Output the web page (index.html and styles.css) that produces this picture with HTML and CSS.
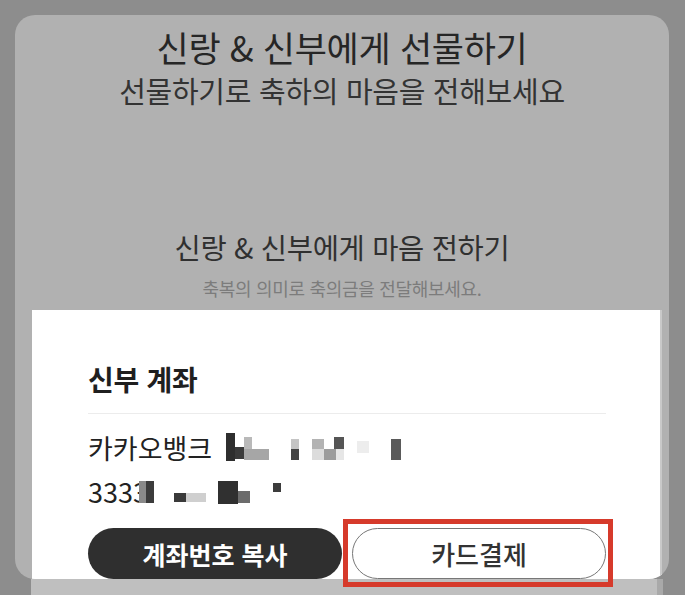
FILE: index.html
```html
<!DOCTYPE html>
<html lang="ko">
<head>
  <meta charset="UTF-8" />
  <meta name="viewport" content="width=device-width, initial-scale=1.0"/>
  <title>마음 전하기</title>
  <link rel="stylesheet" href="styles.css">
</head>
<body>
  <div class="page">
    <div class="sheet">
      <h1 class="gift-title">신랑 &amp; 신부에게 선물하기</h1>
      <p class="gift-sub">선물하기로 축하의 마음을 전해보세요</p>

      <h2 class="money-title">신랑 &amp; 신부에게 마음 전하기</h2>
      <p class="money-sub">축복의 의미로 축의금을 전달해보세요.</p>

      <div class="account-card">
        <h3 class="account-title">신부 계좌</h3>
        <div class="account-line">
          <span>카카오뱅크</span>
          <svg class="mosaic" width="190" height="30" viewBox="0 0 190 30">
            <rect x="0" y="0" width="9" height="28" fill="#2e2e2e"/>
            <rect x="9" y="14" width="9" height="12" fill="#3a3a3a"/>
            <rect x="18" y="4" width="8" height="12" fill="#b9b9b9"/>
            <rect x="18" y="16" width="25" height="11" fill="#a6a6a6"/>
            <rect x="65" y="6" width="8" height="10" fill="#c4c4c4"/>
            <rect x="65" y="16" width="8" height="11" fill="#444"/>
            <rect x="86" y="6" width="12" height="10" fill="#b3b3b3"/>
            <rect x="98" y="16" width="12" height="11" fill="#9c9c9c"/>
            <rect x="86" y="16" width="12" height="11" fill="#dcdcdc"/>
            <rect x="108" y="4" width="10" height="12" fill="#555"/>
            <rect x="110" y="16" width="8" height="11" fill="#e6e6e6"/>
            <rect x="131" y="8" width="12" height="12" fill="#ededed"/>
            <rect x="165" y="6" width="10" height="21" fill="#5a5a5a"/>
          </svg>
        </div>
        <div class="account-line number">
          <span>3333</span>
          <svg class="mosaic" width="160" height="30" viewBox="0 0 160 30">
            <rect x="0" y="4" width="7" height="22" fill="#8a8a8a"/>
            <rect x="7" y="4" width="8" height="22" fill="#3c3c3c"/>
            <rect x="35" y="16" width="12" height="9" fill="#3a3a3a"/>
            <rect x="47" y="16" width="20" height="9" fill="#cfcfcf"/>
            <rect x="79" y="4" width="20" height="23" fill="#303030"/>
            <rect x="99" y="14" width="12" height="12" fill="#6c6c6c"/>
            <rect x="134" y="6" width="8" height="9" fill="#3c3c3c"/>
          </svg>
        </div>
        <div class="actions">
          <button class="btn btn-dark">계좌번호 복사</button>
          <button class="btn btn-light">카드결제</button>
        </div>
      </div>
    </div>
    <div class="peek"></div>
    <div class="highlight"></div>
  </div>
</body>
</html>
```

FILE: styles.css
```css
* {
  box-sizing: border-box;
}

body {
  margin: 0;
  background: #8d8d8d;
  font-family: "Noto Sans CJK KR", "Noto Sans", sans-serif;
  overflow: hidden;
}

.page {
  position: relative;
  width: 685px;
  height: 595px;
  padding: 15px 16px 0 15px;
}

.sheet {
  height: 564px;
  background: #b1b1b1;
  border-radius: 20px;
  overflow: hidden;
  padding-top: 10px;
  display: flex;
  flex-direction: column;
  text-align: center;
}

.gift-title {
  margin: 0;
  font-size: 35px;
  line-height: 44px;
  font-weight: 400;
  color: #262626;
  letter-spacing: -0.3px;
}

.gift-sub {
  margin: 3px 0 0;
  font-size: 29px;
  line-height: 36px;
  color: #333;
  letter-spacing: -0.3px;
}

.money-title {
  margin: 121px 0 0;
  font-size: 28.5px;
  line-height: 36px;
  font-weight: 400;
  color: #303030;
  letter-spacing: -0.3px;
}

.money-sub {
  margin: 12px 0 0;
  font-size: 18px;
  line-height: 22px;
  color: #7c7c7c;
  letter-spacing: -0.3px;
}

.account-card {
  flex: 1;
  margin: 11px 7px 0 17px;
  background: #fff;
  border-right: 2px solid #c9c9c9;
  padding: 51px 54px 0 56px;
  text-align: left;
}

.account-title {
  margin: 0;
  font-size: 28px;
  line-height: 36px;
  font-weight: 700;
  color: #1f1f1f;
  letter-spacing: -0.3px;
  padding-bottom: 16px;
  border-bottom: 1px solid #ececec;
}

.account-line {
  margin-top: 17px;
  display: flex;
  align-items: center;
  gap: 14px;
  font-size: 27px;
  line-height: 34px;
  color: #222;
}

.account-line.number {
  margin-top: 10px;
  gap: 0;
}

.number .mosaic {
  margin-left: -9px;
}

.actions {
  margin-top: 19px;
  display: grid;
  grid-template-columns: 1fr 1fr;
  gap: 10px;
}

.btn {
  height: 51px;
  border-radius: 26px;
  font-family: inherit;
  cursor: pointer;
}

.btn-dark {
  background: #2f2f2f;
  border: none;
  color: #fff;
  font-size: 25px;
  font-weight: 700;
}

.btn-light {
  background: #fff;
  border: 1.5px solid #777;
  color: #333;
  font-size: 26px;
  font-weight: 500;
}

.peek {
  height: 16px;
  margin: 0 6px 0 16px;
  background: #bfbfbf;
  border-right: 6px solid #a9a9a9;
}

.highlight {
  position: absolute;
  left: 343px;
  top: 519px;
  width: 270px;
  height: 68px;
  border: 5px solid #d63a2b;
}
```
